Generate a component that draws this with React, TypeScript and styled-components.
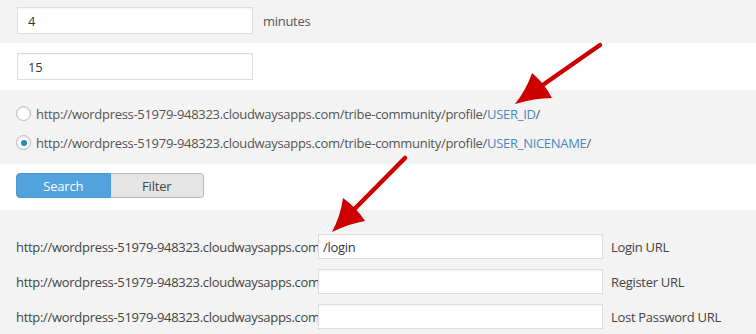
import React from "react";
import styled, { createGlobalStyle } from "styled-components";

const Global = createGlobalStyle`
  html, body { margin: 0; padding: 0; background: #ffffff; }
  body { font-family: "Open Sans", "Noto Sans", sans-serif; font-size: 13px; color: #444; letter-spacing: -0.3px; }
  * { box-sizing: border-box; }
`;

const Page = styled.div`
  position: relative;
  width: 756px;
  height: 334px;
  overflow: hidden;
`;

const Band = styled.div<{ $grey?: boolean; $h: number; $pt: number }>`
  background: ${(p) => (p.$grey ? "#f3f3f3" : "#ffffff")};
  height: ${(p) => p.$h}px;
  padding: ${(p) => p.$pt}px 0 0 16px;
  display: flex;
  flex-direction: column;
`;

const InlineRow = styled.div`
  display: flex;
  align-items: center;
  gap: 10px;
`;

const TextInput = styled.input`
  width: 236px;
  height: 27px;
  margin-left: 1px;
  border: 1px solid #dddddd;
  background: #fff;
  box-shadow: inset 0 1px 2px rgba(0, 0, 0, 0.05);
  font-family: inherit;
  font-size: 13px;
  letter-spacing: -0.3px;
  color: #32373c;
  padding: 0 10px;
  outline: none;
`;

const Unit = styled.span`
  color: #555;
  font-size: 13px;
`;

const RadioList = styled.div`
  display: flex;
  flex-direction: column;
  gap: 10px;
`;

const RadioRow = styled.label`
  display: flex;
  align-items: center;
  gap: 5px;
  height: 19px;
  color: #555;
  font-size: 13px;
  white-space: nowrap;
`;

const RadioDot = styled.span<{ $checked?: boolean }>`
  width: 15px;
  height: 15px;
  border-radius: 50%;
  border: 1px solid #b4b9be;
  background: #fff;
  box-shadow: inset 0 1px 2px rgba(0, 0, 0, 0.1);
  display: inline-flex;
  align-items: center;
  justify-content: center;
  &::after {
    content: "";
    width: 6px;
    height: 6px;
    border-radius: 50%;
    background: ${(p) => (p.$checked ? "#1e8cbe" : "transparent")};
  }
`;

const Token = styled.span`
  color: #4a86be;
`;

const Segmented = styled.div`
  display: flex;
  width: 188px;
  height: 25px;
`;

const SegButton = styled.button<{ $active?: boolean }>`
  flex: 1;
  height: 25px;
  font-family: inherit;
  font-size: 13px;
  letter-spacing: -0.2px;
  padding: 0;
  cursor: pointer;
  border: 1px solid ${(p) => (p.$active ? "#4a97d4" : "#b9b9b9")};
  background: ${(p) => (p.$active ? "#51a2dd" : "#e5e5e5")};
  color: ${(p) => (p.$active ? "#ffffff" : "#444")};
  border-radius: ${(p) => (p.$active ? "4px 0 0 4px" : "0 4px 4px 0")};
  ${(p) => (p.$active ? "" : "border-left: none;")}
`;

const UrlTable = styled.div`
  display: flex;
  flex-direction: column;
  gap: 10px;
`;

const UrlRow = styled.div`
  display: flex;
  align-items: center;
  height: 25px;
  white-space: nowrap;
`;

const Base = styled.span`
  width: 302px;
  flex: none;
  color: #444;
  font-size: 13px;
`;

const UrlInput = styled.input`
  width: 285px;
  height: 25px;
  flex: none;
  border: 1px solid #dddddd;
  background: #fff;
  box-shadow: inset 0 1px 2px rgba(0, 0, 0, 0.05);
  font-family: inherit;
  font-size: 13px;
  letter-spacing: -0.3px;
  color: #32373c;
  padding: 0 4px;
  outline: none;
`;

const UrlLabel = styled.span`
  margin-left: 8px;
  color: #444;
  font-size: 13px;
`;

const Overlay = styled.svg`
  position: absolute;
  left: 0;
  top: 0;
  pointer-events: none;
`;

function Arrow({ tail, tip, b1, b2 }: { tail: [number, number]; tip: [number, number]; b1: [number, number]; b2: [number, number] }) {
  const mid: [number, number] = [(b1[0] + b2[0]) / 2, (b1[1] + b2[1]) / 2];
  const neck: [number, number] = [mid[0] + (tip[0] - mid[0]) * -0.1, mid[1] + (tip[1] - mid[1]) * -0.1];
  return (
    <g>
      <line x1={tail[0]} y1={tail[1]} x2={mid[0]} y2={mid[1]} stroke="#cc0000" strokeWidth={4.5} strokeLinecap="round" />
      <path
        d={`M${tip[0]} ${tip[1]} Q ${(tip[0] + b1[0]) / 2 + 3} ${(tip[1] + b1[1]) / 2 + 1} ${b1[0]} ${b1[1]} Q ${neck[0]} ${neck[1]} ${b2[0]} ${b2[1]} Q ${(tip[0] + b2[0]) / 2 + 1} ${(tip[1] + b2[1]) / 2 - 3} ${tip[0]} ${tip[1]} Z`}
        fill="#cc0000"
      />
    </g>
  );
}

const BASE = "http://wordpress-51979-948323.cloudwaysapps.com";

export default function App() {
  return (
    <Page>
      <Global />
      <Band $grey $h={43} $pt={7}>
        <InlineRow>
          <TextInput defaultValue="4" />
          <Unit>minutes</Unit>
        </InlineRow>
      </Band>
      <Band $h={47} $pt={10}>
        <InlineRow>
          <TextInput defaultValue="15" />
        </InlineRow>
      </Band>
      <Band $grey $h={74} $pt={14}>
        <RadioList>
          <RadioRow>
            <RadioDot />
            <span>
              {BASE}/tribe-community/profile/<Token>USER_ID</Token>/
            </span>
          </RadioRow>
          <RadioRow>
            <RadioDot $checked />
            <span>
              {BASE}/tribe-community/profile/<Token>USER_NICENAME</Token>/
            </span>
          </RadioRow>
        </RadioList>
      </Band>
      <Band $h={46} $pt={9}>
        <Segmented>
          <SegButton $active>Search</SegButton>
          <SegButton>Filter</SegButton>
        </Segmented>
      </Band>
      <Band $grey $h={124} $pt={24}>
        <UrlTable>
          <UrlRow>
            <Base>{BASE}</Base>
            <UrlInput defaultValue="/login" />
            <UrlLabel>Login URL</UrlLabel>
          </UrlRow>
          <UrlRow>
            <Base>{BASE}</Base>
            <UrlInput />
            <UrlLabel>Register URL</UrlLabel>
          </UrlRow>
          <UrlRow>
            <Base>{BASE}</Base>
            <UrlInput />
            <UrlLabel>Lost Password URL</UrlLabel>
          </UrlRow>
        </UrlTable>
      </Band>
      <Overlay width={756} height={334} viewBox="0 0 756 334">
        <Arrow tail={[600, 45]} tip={[515, 104]} b1={[532, 73]} b2={[552, 98]} />
        <Arrow tail={[405, 158]} tip={[332, 232]} b1={[343, 198]} b2={[365, 221]} />
      </Overlay>
    </Page>
  );
}
